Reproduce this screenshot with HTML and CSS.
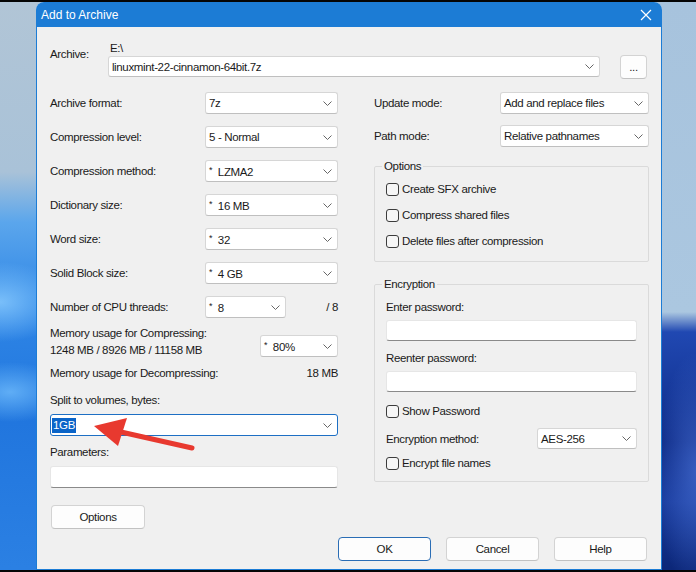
FILE: index.html
```html
<!DOCTYPE html>
<html lang="en">
<head>
    <meta charset="UTF-8">
    <title>Add to Archive</title>
    <link rel="stylesheet" href="styles.css">
</head>
<body>
<div class="screen">
    <div class="edge"></div>
    <div class="desk">
        <div class="window">
            <div class="titlebar">
                <span>Add to Archive</span>
                <svg class="close" width="12" height="12" viewBox="0 0 12 12">
                    <path d="M1 1 L11 11 M11 1 L1 11" stroke="#fff" stroke-width="1.2" fill="none"/>
                </svg>
            </div>
            <div class="client">
                <div class="archive-row">
                    <span class="archive-label">Archive:</span>
                    <div class="archive-path">
                        <div class="path">E:\</div>
                        <div class="combo">
                            <span>linuxmint-22-cinnamon-64bit.7z</span>
                            <svg class="chev" width="9" height="5" viewBox="0 0 9 5"><path d="M0.5 0.5 L4.5 4.5 L8.5 0.5" stroke="#666" fill="none"/></svg>
                        </div>
                    </div>
                    <button class="btn dots">...</button>
                </div>

                <div class="columns">
                    <div class="left">
                        <div class="row">
                            <span>Archive format:</span>
                            <div class="combo mid"><span>7z</span><svg class="chev" width="9" height="5" viewBox="0 0 9 5"><path d="M0.5 0.5 L4.5 4.5 L8.5 0.5" stroke="#666" fill="none"/></svg></div>
                        </div>
                        <div class="row">
                            <span>Compression level:</span>
                            <div class="combo mid"><span>5 - Normal</span><svg class="chev" width="9" height="5" viewBox="0 0 9 5"><path d="M0.5 0.5 L4.5 4.5 L8.5 0.5" stroke="#666" fill="none"/></svg></div>
                        </div>
                        <div class="row">
                            <span>Compression method:</span>
                            <div class="combo mid"><span><sup>*</sup>&nbsp; LZMA2</span><svg class="chev" width="9" height="5" viewBox="0 0 9 5"><path d="M0.5 0.5 L4.5 4.5 L8.5 0.5" stroke="#666" fill="none"/></svg></div>
                        </div>
                        <div class="row">
                            <span>Dictionary size:</span>
                            <div class="combo mid"><span><sup>*</sup>&nbsp; 16 MB</span><svg class="chev" width="9" height="5" viewBox="0 0 9 5"><path d="M0.5 0.5 L4.5 4.5 L8.5 0.5" stroke="#666" fill="none"/></svg></div>
                        </div>
                        <div class="row">
                            <span>Word size:</span>
                            <div class="combo mid"><span><sup>*</sup>&nbsp; 32</span><svg class="chev" width="9" height="5" viewBox="0 0 9 5"><path d="M0.5 0.5 L4.5 4.5 L8.5 0.5" stroke="#666" fill="none"/></svg></div>
                        </div>
                        <div class="row">
                            <span>Solid Block size:</span>
                            <div class="combo mid"><span><sup>*</sup>&nbsp; 4 GB</span><svg class="chev" width="9" height="5" viewBox="0 0 9 5"><path d="M0.5 0.5 L4.5 4.5 L8.5 0.5" stroke="#666" fill="none"/></svg></div>
                        </div>
                        <div class="row">
                            <span class="threads-label">Number of CPU threads:</span>
                            <div class="combo small"><span><sup>*</sup>&nbsp; 8</span><svg class="chev" width="9" height="5" viewBox="0 0 9 5"><path d="M0.5 0.5 L4.5 4.5 L8.5 0.5" stroke="#666" fill="none"/></svg></div>
                            <span class="threads">/ 8</span>
                        </div>
                        <div class="memory">
                            <div class="memory-text">
                                <div>Memory usage for Compressing:</div>
                                <div>1248 MB / 8926 MB / 11158 MB</div>
                            </div>
                            <div class="combo percent"><span><sup>*</sup>&nbsp; 80%</span><svg class="chev" width="9" height="5" viewBox="0 0 9 5"><path d="M0.5 0.5 L4.5 4.5 L8.5 0.5" stroke="#666" fill="none"/></svg></div>
                        </div>
                        <div class="decompress">
                            <span>Memory usage for Decompressing:</span>
                            <span>18 MB</span>
                        </div>
                        <div class="caption split-label">Split to volumes, bytes:</div>
                        <div class="combo focused"><span class="selected">1GB</span><svg class="chev" width="9" height="5" viewBox="0 0 9 5"><path d="M0.5 0.5 L4.5 4.5 L8.5 0.5" stroke="#666" fill="none"/></svg></div>
                        <div class="caption params-label">Parameters:</div>
                        <div class="textbox params"></div>
                        <button class="btn options-btn">Options</button>
                    </div>

                    <div class="right">
                        <div class="row">
                            <span>Update mode:</span>
                            <div class="combo wide"><span>Add and replace files</span><svg class="chev" width="9" height="5" viewBox="0 0 9 5"><path d="M0.5 0.5 L4.5 4.5 L8.5 0.5" stroke="#666" fill="none"/></svg></div>
                        </div>
                        <div class="row">
                            <span>Path mode:</span>
                            <div class="combo wide"><span>Relative pathnames</span><svg class="chev" width="9" height="5" viewBox="0 0 9 5"><path d="M0.5 0.5 L4.5 4.5 L8.5 0.5" stroke="#666" fill="none"/></svg></div>
                        </div>
                        <fieldset class="group options-group">
                            <legend>Options</legend>
                            <label class="check"><span class="box"></span>Create SFX archive</label>
                            <label class="check"><span class="box"></span>Compress shared files</label>
                            <label class="check"><span class="box"></span>Delete files after compression</label>
                        </fieldset>
                        <fieldset class="group encryption-group">
                            <legend>Encryption</legend>
                            <div class="caption">Enter password:</div>
                            <div class="textbox password"></div>
                            <div class="caption reenter">Reenter password:</div>
                            <div class="textbox password"></div>
                            <label class="check show-pass"><span class="box"></span>Show Password</label>
                            <div class="row method">
                                <span>Encryption method:</span>
                                <div class="combo aes"><span>AES-256</span><svg class="chev" width="9" height="5" viewBox="0 0 9 5"><path d="M0.5 0.5 L4.5 4.5 L8.5 0.5" stroke="#666" fill="none"/></svg></div>
                            </div>
                            <label class="check names"><span class="box"></span>Encrypt file names</label>
                        </fieldset>
                    </div>
                </div>

                <div class="actions">
                    <button class="btn default">OK</button>
                    <button class="btn">Cancel</button>
                    <button class="btn">Help</button>
                </div>
            </div>
        </div>
    </div>
    <div class="edge"></div>

    <!-- red pointer drawn over the dialog -->
    <svg class="pointer" width="696" height="572" viewBox="0 0 696 572">
        <path d="M192 448 L121 432" stroke="#e8392f" stroke-width="5" stroke-linecap="round"/>
        <polygon points="94,426 127,418 118,446" fill="#e8392f"/>
    </svg>
</div>
</body>
</html>
```

FILE: styles.css
```css
body {
    margin: 0;
    padding: 0;
    background: #000;
    font-family: "Liberation Sans", Arial, sans-serif;
    font-size: 11.5px;
    letter-spacing: -0.35px;
    color: #1a1a1a;
}
.screen {
    position: relative;
    width: 696px;
    height: 572px;
    display: flex;
    flex-direction: column;
    overflow: hidden;
}
.edge {
    height: 3px;
    background: #050505;
}
.desk {
    flex: 1;
    display: flex;
    padding-left: 36px;
    background:
        radial-gradient(70px 40px at 0 300px, rgba(140, 205, 255, 0.8), transparent),
        radial-gradient(60px 30px at 10px 390px, rgba(120, 195, 255, 0.7), transparent),
        linear-gradient(to bottom, #b1c5d6 0, #a9c2d8 170px, #5ba6ec 220px, #2f86e6 300px, #2176de 420px, #2b80e3 566px) left / 40px 100% no-repeat,
        radial-gradient(40px 120px at 100% 470px, rgba(70, 110, 210, 0.7), transparent) right / 40px 100% no-repeat,
        linear-gradient(to bottom, #a7c3dd 0, #abc7e0 310px, #2048b2 330px, #0e2b86 440px, #183a9c 500px, #0c2779 566px) right / 40px 100% no-repeat,
        #a8c3dc;
}
.window {
    width: 626px;
    display: flex;
    flex-direction: column;
    background: #f0f0f0;
    border-radius: 8px 8px 0 0;
    overflow: hidden;
}
.titlebar {
    height: 25px;
    background: #1c7cd5;
    color: #fff;
    font-size: 12px;
    letter-spacing: 0;
    display: flex;
    align-items: center;
    justify-content: space-between;
    padding: 0 10px 0 5px;
}
.titlebar span {
    padding-top: 1px;
}
.client {
    flex: 1;
    padding: 14px 14px 8px 13px;
    border: 1px solid #1c7cd5;
    border-top: none;
}

/* archive name */
.archive-row {
    display: flex;
    align-items: flex-start;
}
.archive-label {
    width: 58px;
    padding-top: 5px;
    line-height: 17px;
}
.archive-path {
    width: 493px;
}
.path {
    line-height: 15px;
    padding-left: 2px;
}
.dots {
    width: 27px;
    height: 23px;
    margin: 14px 0 0 20px;
    padding: 0 0 4px;
    font-size: 10px;
}

/* two columns */
.columns {
    display: grid;
    grid-template-columns: 288px 275px;
    column-gap: 36px;
    align-items: start;
    margin-top: 13px;
}
.row {
    display: flex;
    align-items: center;
    justify-content: space-between;
    height: 22px;
    margin-bottom: 12px;
}
.right .row {
    margin-bottom: 11px;
}
.threads-label {
    flex: 0 0 155px;
}
.threads {
    margin-left: auto;
}
.combo {
    box-sizing: border-box;
    height: 22px;
    display: flex;
    align-items: center;
    justify-content: space-between;
    padding: 0 5px 0 3px;
    background: #fff;
    border: 1px solid #d6d6d6;
    border-bottom-color: #bfbfbf;
    border-radius: 3px;
    white-space: nowrap;
}
.archive-path .combo {
    height: 21px;
}
.combo sup {
    font-size: 9px;
    vertical-align: 3px;
}
.combo.mid { width: 133px; }
.combo.small { width: 81px; }
.combo.percent { width: 78px; margin-top: 10px; }
.combo.wide { width: 149px; }
.combo.aes { width: 100px; height: 21px; }
.combo.focused {
    border: 1px solid #1d6fc4;
    margin-top: 5px;
    padding-left: 1px;
}
.selected {
    background: #0a64c8;
    color: #fff;
    padding: 0 1px;
    line-height: 15px;
}
.chev {
    flex-shrink: 0;
}
.memory {
    display: flex;
    justify-content: space-between;
    align-items: flex-start;
    margin-top: -5px;
    line-height: 17px;
}
.decompress {
    display: flex;
    justify-content: space-between;
    line-height: 17px;
    margin-top: 6px;
}
.caption {
    line-height: 17px;
}
.split-label {
    margin-top: 10px;
}
.params-label {
    margin-top: 8px;
}
.textbox {
    box-sizing: border-box;
    height: 22px;
    background: #fff;
    border: 1px solid #e6e6e6;
    border-bottom: 1px solid #8a8a8a;
    border-radius: 3px;
}
.params {
    margin-top: 5px;
}
.btn {
    box-sizing: border-box;
    height: 24px;
    background: #fdfdfd;
    border: 1px solid #d3d3d3;
    border-bottom-color: #c2c2c2;
    border-radius: 4px;
    font-family: inherit;
    font-size: 11.5px;
    letter-spacing: -0.35px;
    color: #1a1a1a;
    padding: 0;
}
.options-btn {
    display: block;
    width: 94px;
    margin: 17px 0 0 1px;
}

/* group boxes */
.group {
    margin: 0;
    padding: 6px 11px 11px 11px;
    border: 1px solid #dadada;
    border-radius: 2px;
}
.group legend {
    padding: 0 2px;
    margin-left: -4px;
    line-height: 17px;
}
.options-group {
    margin-top: 10px;
}
.encryption-group {
    margin-top: 14px;
    padding-right: 11px;
    padding-bottom: 9px;
}
.check {
    display: flex;
    align-items: center;
    line-height: 17px;
    margin-top: 9px;
}
.options-group .check:first-of-type {
    margin-top: 0;
}
.box {
    box-sizing: border-box;
    width: 13px;
    height: 13px;
    margin-right: 3px;
    border: 1px solid #3c3c3c;
    border-radius: 3px;
    background: #f6f6f6;
}
.password {
    height: 21px;
    margin-top: 4px;
}
.reenter {
    margin-top: 9px;
}
.show-pass {
    margin-top: 11px;
}
.right .row.method {
    height: 21px;
    margin: 8px 0 0;
}
.names {
    margin-top: 6px;
}

/* bottom buttons */
.actions {
    display: flex;
    justify-content: flex-end;
    gap: 15px;
    margin-top: 8px;
}
.actions .btn {
    width: 93px;
}
.actions .default {
    border-color: #2a6db5;
}

.pointer {
    position: absolute;
    left: 0;
    top: 0;
    pointer-events: none;
}
```
